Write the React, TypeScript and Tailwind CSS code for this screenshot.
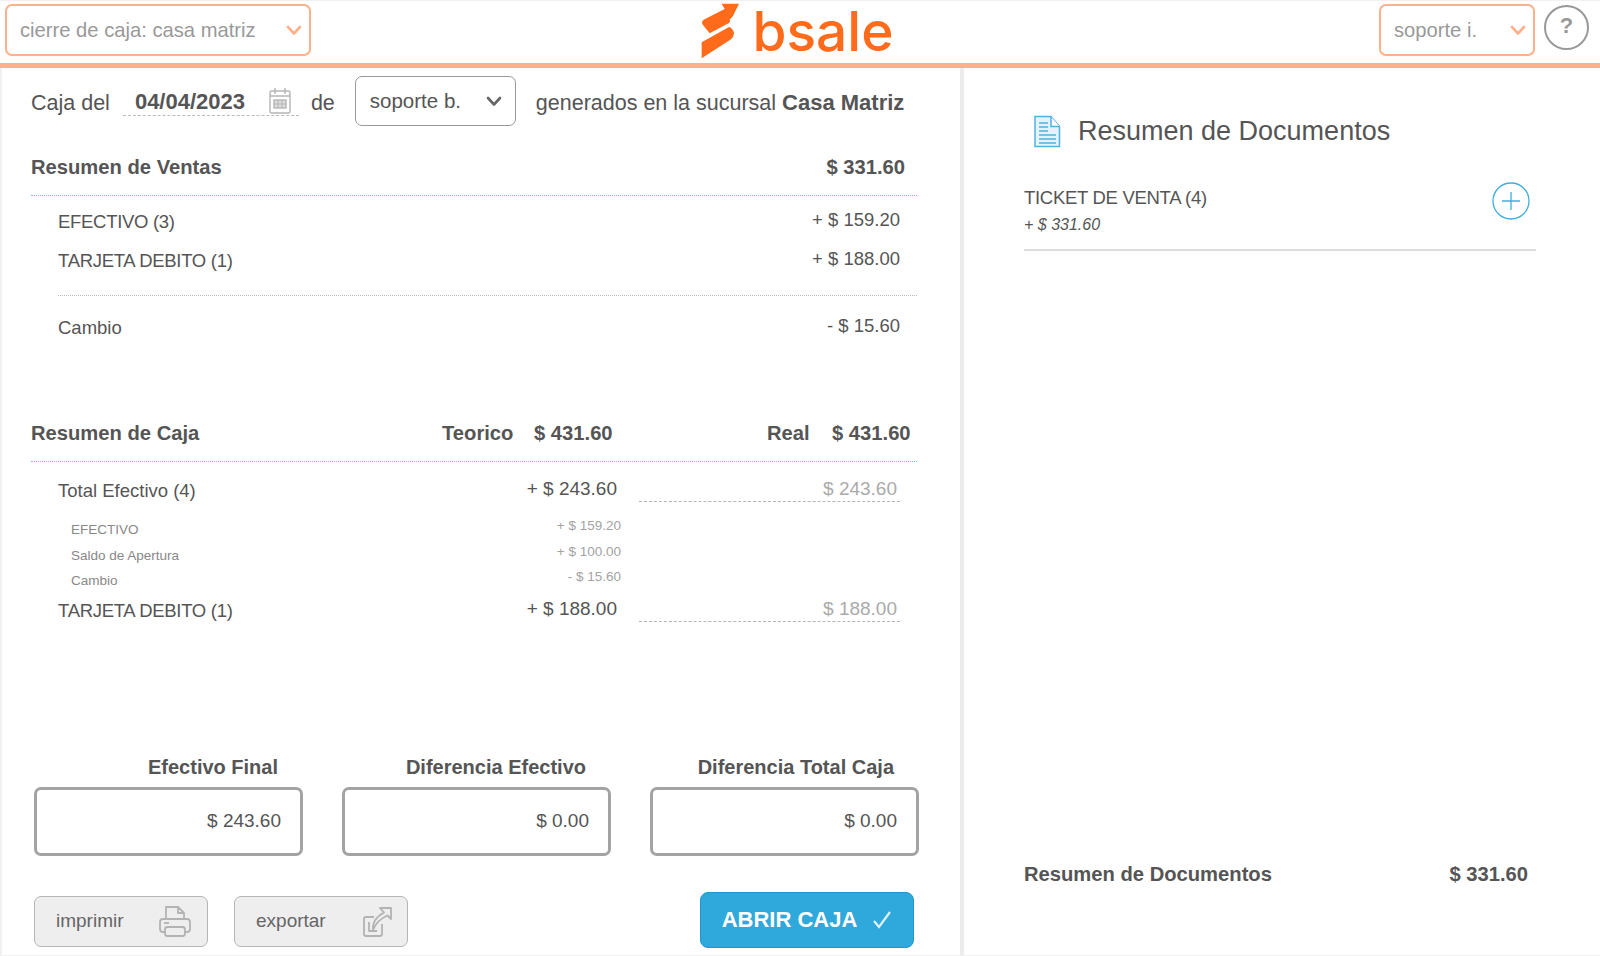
const sans = "font-['Liberation_Sans',Arial,sans-serif]";

function Chevron({ color, className }: { color: string; className?: string }) {
  return (
    <svg width="16" height="11" viewBox="0 0 16 11" fill="none" className={className}>
      <path d="M2 2l6 6.500L14 2" stroke={color} strokeWidth="2.6" strokeLinecap="round" strokeLinejoin="round" />
    </svg>
  );
}

function Logo() {
  return (
    <div className="flex items-center mr-[1px] -mt-[3px] h-[60px]">
      <svg width="40" height="60" viewBox="480 0 120 180" className="mr-[13px]">
        <path d="M600 8L548 8L557 24L498 54Q484 62 492 72L512 97L570 66Q576 60 572 56L582 45Z" fill="#ff6b1a" />
        <path d="M488 124L570 78Q582 82 585 96Q584 110 574 116L488 172Z" fill="#ff6b1a" />
      </svg>
      <span className="font-['Inter',sans-serif] text-[55px] leading-[56px] font-medium text-[#ff6b1a]">bsale</span>
    </div>
  );
}

function TopSelect({ label, width }: { label: string; width: string }) {
  return (
    <div className={`${width} h-[52px] border-[2px] border-[#ffb088] rounded-[7px] flex items-center justify-between pl-[13px] pr-[7px] bg-white`}>
      <span className="text-[20.2px] text-[#999] pt-[1px]">{label}</span>
      <Chevron color="#ffb088" />
    </div>
  );
}

function CalendarIcon() {
  return (
    <svg width="24" height="28" viewBox="0 0 24 28" fill="none" stroke="#b5b5b5" strokeWidth="1.4">
      <rect x="2" y="4" width="20" height="22" rx="1.5" />
      <path d="M2 9h20M7 1v6M17 1v6" />
      <rect x="6" y="13" width="12" height="8" fill="#ddd" />
      <path d="M10 13v8M14 13v8M6 17h12" strokeWidth="1" />
    </svg>
  );
}

function DocIcon() {
  return (
    <svg width="28" height="33" viewBox="0 0 28 33" fill="#e4f3fb" stroke="#4fb3e0" strokeWidth="1.5">
      <path d="M2 1.500h16l8.500 10v20H2z" />
      <path d="M18 1.500v10h8.500" fill="#fff" />
      <path d="M6 8h9M6 12h9M6 16h9M6 20h17M6 24h17M6 28h17" strokeWidth="1.6" />
    </svg>
  );
}

function PrinterIcon() {
  return (
    <svg width="34" height="34" viewBox="0 0 34 34" fill="none" stroke="#b3b3b3" strokeWidth="1.8" strokeLinejoin="round">
      <path d="M8 14V2h12l6 6v6" />
      <path d="M20 2v6h6" />
      <path d="M8 27H5q-3 0-3-3v-7q0-3 3-3h24q3 0 3 3v7q0 3-3 3h-3" />
      <rect x="7" y="22" width="20" height="9" rx="2.5" />
      <path d="M6 18h5" />
    </svg>
  );
}

function ExportIcon() {
  return (
    <svg width="30" height="32" viewBox="0 0 30 32" fill="none" stroke="#b3b3b3" strokeWidth="1.8" strokeLinejoin="round">
      <path d="M20 18v10q0 2-2 2H4q-2 0-2-2V13q0-2 2-2h8" />
      <path d="M7 16v9h8" />
      <path d="M18 2h11v11l-3.500-3.500Q15 14 11 24q-1-11 11-17.500z" />
    </svg>
  );
}

function capsClass(label: string) {
  return label === label.toUpperCase() ? "tracking-[-0.3px]" : "";
}

function Row({ label, value, className }: { label: string; value: string; className?: string }) {
  return (
    <div className={`flex justify-between items-start pl-[27px] pr-[17px] text-[18.5px] leading-[24px] text-[#555] ${className ?? ""}`}>
      <span className={`mt-[2px] ${capsClass(label)}`}>{label}</span>
      <span>{value}</span>
    </div>
  );
}

function CajaRow({ label, value, real, className }: { label: string; value: string; real: string; className?: string }) {
  return (
    <div className={`flex pl-[27px] text-[18.5px] leading-[24px] text-[#555] ${className ?? ""}`}>
      <span className={`w-[451px] mt-[2px] ${capsClass(label)}`}>{label}</span>
      <span className="w-[108px] text-right text-[19px]">{value}</span>
      <div className="ml-[22px] w-[261px] h-[25px] border-b border-dashed border-[#b5b5b5] text-right pr-[3px] text-[19px] text-[#aaa]">{real}</div>
    </div>
  );
}

function SubRow({ label, value }: { label: string; value: string }) {
  return (
    <div className="flex pl-[40px] h-[25.5px] text-[13.5px] leading-[20px] text-[#888]">
      <span className="w-[446px] mt-[4px]">{label}</span>
      <span className="w-[104px] text-right text-[#a3a3a3]">{value}</span>
    </div>
  );
}

function TotalBox({ label, value }: { label: string; value: string }) {
  return (
    <div className="w-[269px] shrink-0">
      <div className="text-[20px] leading-[24px] font-bold text-[#555] text-right pr-[25px]">{label}</div>
      <div className="mt-[8px] h-[69px] border-[3px] border-[#a3a3a3] rounded-[7px] flex items-center justify-end pr-[19px] pt-[1px] text-[19px] text-[#555]">{value}</div>
    </div>
  );
}

function GrayButton({ label, icon }: { label: string; icon: React.ReactNode }) {
  return (
    <div className="w-[174px] h-[51px] mt-[4px] bg-[#eeeeee] border border-[#b5b5b5] rounded-[7px] flex items-center justify-between pl-[21px] pr-[15px] text-[19px] text-[#666]">
      <span>{label}</span>
      {icon}
    </div>
  );
}

export default function App() {
  return (
    <div className={`${sans} w-[1600px] h-[956px] flex flex-col bg-white overflow-hidden border-b border-[#f1f1f1]`}>
      {/* Header */}
      <header className="h-[68px] shrink-0 grid grid-cols-[1fr_auto_1fr] border-b-[5px] border-[#ffb088] pl-[5px] pr-[11px] pt-[3px] border-t border-t-[#f1f1f1]">
        <TopSelect label="cierre de caja: casa matriz" width="w-[306px]" />
        <Logo />
        <div className="flex justify-end gap-[9px]">
          <TopSelect label="soporte i." width="w-[156px]" />
          <div className="w-[45px] h-[45px] mt-[1px] border-[2px] border-[#999] rounded-full flex items-center justify-center text-[22px] font-bold text-[#999] pb-[5px]">?</div>
        </div>
      </header>

      <div className="flex flex-1 min-h-0">
        {/* Left panel */}
        <main className="w-[964px] shrink-0 border-r-[4px] border-r-[#ececec] border-l-[2px] border-l-[#f1f1f1] pl-[29px] pr-[43px]">
          <div className="flex items-center h-[50px] mt-[8px] text-[21.5px] text-[#555] whitespace-nowrap">
            <span className="mt-[4px]">Caja del</span>
            <div className="ml-[13px] w-[176px] h-[32px] self-start mt-[8px] pt-[3px] border-b border-dashed border-[#bbb] flex items-center justify-between pl-[12px] pr-[7px]">
              <span className="font-bold text-[22px]">04/04/2023</span>
              <CalendarIcon />
            </div>
            <span className="ml-[12px] mt-[4px]">de</span>
            <div className="ml-[20px] w-[161px] h-[50px] border border-[#999] rounded-[7px] flex items-center justify-between pl-[14px] pr-[13px] text-[20.5px]">
              <span>soporte b.</span>
              <Chevron color="#666" />
            </div>
            <span className="ml-[20px] mt-[4px]">generados en la sucursal <b className="text-[22px]">Casa Matriz</b></span>
          </div>

          {/* Resumen de Ventas */}
          <div className="mt-[27px] h-[43px] flex justify-between border-b border-dotted border-[#6cc0e5] pr-[12px] text-[20.2px] leading-[28px] font-bold text-[#555]">
            <span>Resumen de Ventas</span>
            <span>$ 331.60</span>
          </div>
          <Row label="EFECTIVO (3)" value="+ $ 159.20" className="mt-[12px]" />
          <Row label="TARJETA DEBITO (1)" value="+ $ 188.00" className="mt-[13px]" />
          <div className="ml-[27px] mt-[22px] border-b border-dotted border-[#bbb]" />
          <Row label="Cambio" value="- $ 15.60" className="mt-[18px]" />

          {/* Resumen de Caja */}
          <div className="mt-[79px] h-[43px] flex border-b border-dotted border-[#6cc0e5] text-[20.2px] leading-[28px] font-bold text-[#555]">
            <span className="w-[411px]">Resumen de Caja</span>
            <span className="w-[92px]">Teorico</span>
            <span className="w-[233px]">$ 431.60</span>
            <span className="w-[65px]">Real</span>
            <span>$ 431.60</span>
          </div>
          <CajaRow label="Total Efectivo (4)" value="+ $ 243.60" real="$ 243.60" className="mt-[15px]" />
          <div className="mt-[13px]">
            <SubRow label="EFECTIVO" value="+ $ 159.20" />
            <SubRow label="Saldo de Apertura" value="+ $ 100.00" />
            <SubRow label="Cambio" value="- $ 15.60" />
          </div>
          <CajaRow label="TARJETA DEBITO (1)" value="+ $ 188.00" real="$ 188.00" className="mt-[4px]" />

          {/* Totales */}
          <div className="flex mt-[132px] ml-[3px] gap-[39px]">
            <TotalBox label="Efectivo Final" value="$ 243.60" />
            <TotalBox label="Diferencia Efectivo" value="$ 0.00" />
            <TotalBox label="Diferencia Total Caja" value="$ 0.00" />
          </div>

          {/* Botones */}
          <div className="flex items-center mt-[36px] ml-[3px]">
            <GrayButton label="imprimir" icon={<PrinterIcon />} />
            <div className="ml-[26px]">
              <GrayButton label="exportar" icon={<ExportIcon />} />
            </div>
            <div className="ml-[292px] w-[214px] h-[56px] shrink-0 bg-[#2fa8dc] border border-[#1f97cc] rounded-[8px] flex items-center justify-center gap-[15px] text-white text-[22px] font-bold">
              <span>ABRIR CAJA</span>
              <svg width="20" height="20" viewBox="0 0 20 20" fill="none">
                <path d="M2 11l5 6L18 2" stroke="#dff2fb" strokeWidth="2.2" />
              </svg>
            </div>
          </div>
        </main>

        {/* Right panel */}
        <aside className="flex-1 flex flex-col pl-[60px] pr-[64px] text-[#555]">
          <div className="flex items-center h-[36px] mt-[45px] ml-[9px] gap-[17px]">
            <DocIcon />
            <span className="text-[27px] leading-[36px] -mt-[1px]">Resumen de Documentos</span>
          </div>
          <div className="mt-[35px] h-[67px] flex justify-between border-b-[2px] border-[#ddd]">
            <div>
              <div className="text-[18.5px] tracking-[-0.3px] leading-[24px] mt-[2px]">TICKET DE VENTA (4)</div>
              <div className="text-[16px] italic leading-[20px] mt-[5px]">+ $ 331.60</div>
            </div>
            <svg width="38" height="38" viewBox="0 0 38 38" fill="none" stroke="#3eaede" strokeWidth="1.3" className="mr-[6px] -mt-[2px]">
              <circle cx="19" cy="19" r="18" />
              <path d="M19 10v18M10 19h18" />
            </svg>
          </div>
          <div className="mt-auto mb-[67px] flex justify-between pr-[8px] text-[20.2px] leading-[28px] font-bold">
            <span>Resumen de Documentos</span>
            <span>$ 331.60</span>
          </div>
        </aside>
      </div>
    </div>
  );
}
